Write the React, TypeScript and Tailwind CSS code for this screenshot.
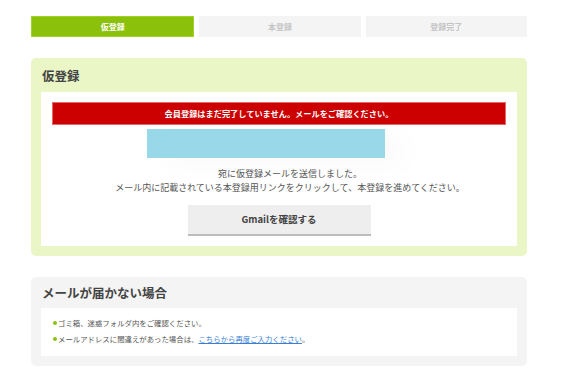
import React from "react";

const steps = ["仮登録", "本登録", "登録完了"];

export default function App() {
  return (
    <div
      className="min-h-[369px] bg-white pt-4"
      style={{ fontFamily: '"Noto Sans CJK JP", "Noto Sans", sans-serif' }}
    >
      <div className="ml-[31px] w-[496px]">
        {/* step tabs */}
        <div className="flex gap-[5px]">
          {steps.map((step, i) => (
            <div
              key={step}
              className={
                i === 0
                  ? "flex h-[21px] flex-1 items-center justify-center border border-[#9fd12a] bg-[#8bc10b] text-[8px] font-bold text-white"
                  : "flex h-[21px] flex-1 items-center justify-center bg-[#f4f4f4] text-[8px] font-bold text-[#c4c4c4]"
              }
            >
              {step}
            </div>
          ))}
        </div>

        {/* provisional registration */}
        <div className="mt-[21px] rounded-[5px] bg-[#eaf6c6] px-[10px] pb-[10px]">
          <h2 className="flex h-[34px] items-center pl-px pt-[2px] text-[12.5px] font-bold text-[#444]">
            仮登録
          </h2>
          <div className="bg-white px-[11px] pt-[10px] pb-[10px]">
            <div className="flex h-[23px] items-center justify-center border border-[#e46a6a] bg-[#cc0000] text-[8.2px] font-bold text-white">
              会員登録はまだ完了していません。メールをご確認ください。
            </div>
            <div className="mt-1 ml-[95px] h-[29px] w-[238px] bg-[#99d8e9] shadow-[20px_8px_30px_rgba(0,0,0,0.025)]" />
            <p className="mt-[9px] pl-[22px] text-center text-[9px] leading-[14px] text-[#555]">
              宛に仮登録メールを送信しました。
              <br />
              メール内に記載されている本登録用リンクをクリックして、本登録を進めてください。
            </p>
            <div className="mt-[10px] flex justify-center">
              <button className="h-[31px] w-[183px] border-b-2 border-[#bdbdbd] bg-[#eeeeee] text-[9.5px] font-bold text-[#444]">
                Gmailを確認する
              </button>
            </div>
          </div>
        </div>

        {/* mail not received */}
        <div className="mt-[21px] rounded-[5px] bg-[#f4f4f4] px-[10px] pb-[10px]">
          <h2 className="flex h-[31px] items-center pl-px pt-[2px] text-[12.5px] font-bold text-[#444]">
            メールが届かない場合
          </h2>
          <ul className="bg-white pt-[7px] pb-[9px] pl-3 text-[7.4px] leading-[16px] text-[#555]">
            <li className="flex items-center">
              <span className="mr-[1px] h-1 w-1 rounded-full bg-[#8bc10b]" />
              ゴミ箱、迷惑フォルダ内をご確認ください。
            </li>
            <li className="flex items-center">
              <span className="mr-[1px] h-1 w-1 rounded-full bg-[#8bc10b]" />
              メールアドレスに間違えがあった場合は、
              <a href="#" className="text-[#3b7fd4] underline">
                こちらから再度ご入力ください
              </a>
              。
            </li>
          </ul>
        </div>
      </div>
    </div>
  );
}
